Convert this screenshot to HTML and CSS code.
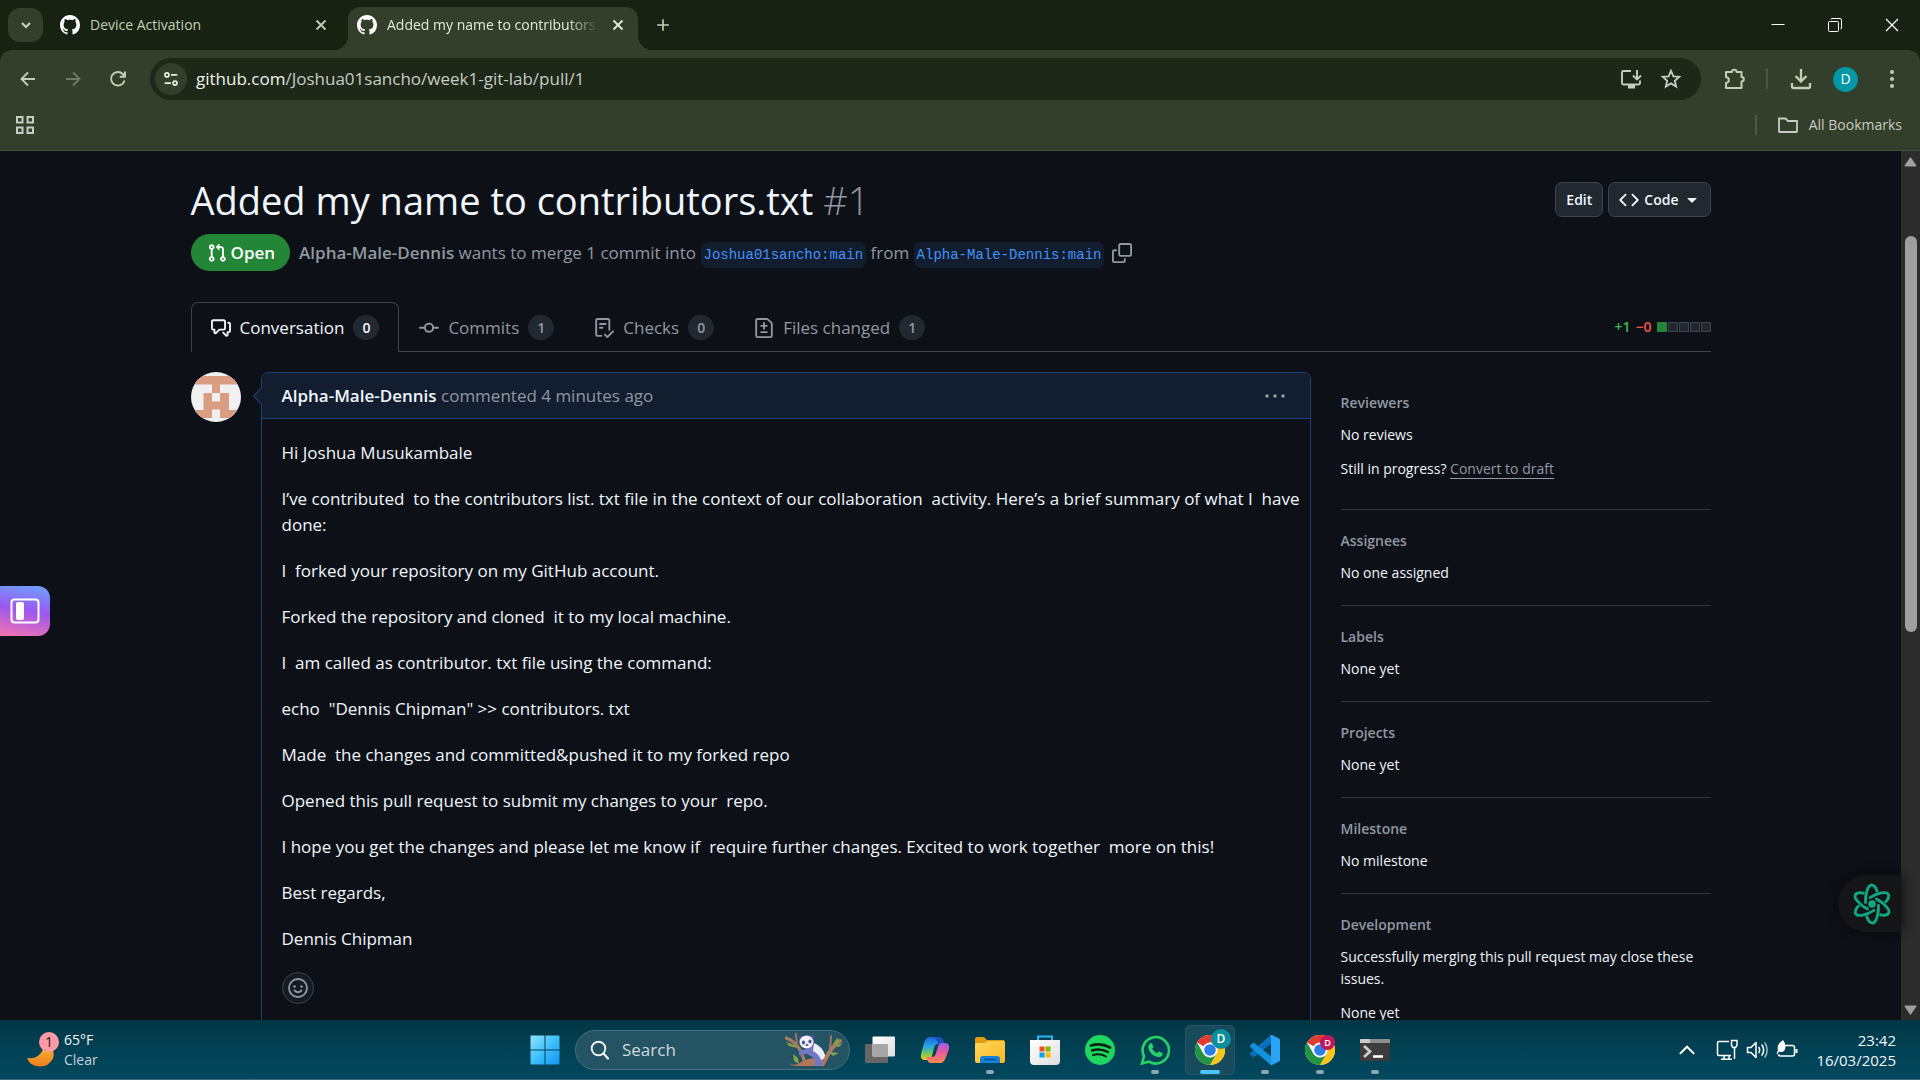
FILE: index.html
```html
<!DOCTYPE html>
<html lang="en">
<head>
<meta charset="utf-8">
<title>Added my name to contributors.txt by Alpha-Male-Dennis</title>
<link rel="stylesheet" href="styles.css">
</head>
<body>
<svg class="defs" aria-hidden="true">
  <defs>
    <symbol id="github" viewBox="0 0 16 16"><path d="M8 0c4.42 0 8 3.58 8 8a8.013 8.013 0 0 1-5.45 7.59c-.4.08-.55-.17-.55-.38 0-.27.01-1.13.01-2.2 0-.75-.25-1.23-.54-1.48 1.78-.2 3.65-.88 3.65-3.95 0-.88-.31-1.59-.82-2.15.08-.2.36-1.02-.08-2.12 0 0-.67-.22-2.2.82-.64-.18-1.32-.27-2-.27-.68 0-1.36.09-2 .27-1.53-1.03-2.2-.82-2.2-.82-.44 1.1-.16 1.92-.08 2.12-.51.56-.82 1.28-.82 2.15 0 3.06 1.86 3.75 3.64 3.95-.23.2-.44.55-.51 1.07-.46.21-1.61.55-2.33-.66-.15-.24-.6-.83-1.23-.82-.67.01-.27.38.01.53.34.19.73.9.82 1.13.16.45.68 1.31 2.69.94 0 .67.01 1.3.01 1.49 0 .21-.15.45-.55.38A7.995 7.995 0 0 1 0 8c0-4.42 3.58-8 8-8Z"/></symbol>
    <symbol id="cross" viewBox="0 0 20 20"><path d="M5.500 5.500l9 9M14.500 5.500l-9 9" fill="none" stroke="currentColor" stroke-width="1.800"/></symbol>
    <symbol id="chrome" viewBox="0 0 30 30">
      <circle cx="15" cy="15" r="15" fill="#fff"/>
      <path d="M15 15 2 7.5A15 15 0 0 1 28 7.5H15Z" fill="#e33b2e"/>
      <path d="M28 7.5A15 15 0 0 1 15 30L21.500 18.750 15 7.500Z" fill="#fcc419"/>
      <path d="M2 7.500A15 15 0 0 0 15 30L21.500 18.750 8.500 18.750Z" fill="#229342"/>
      <circle cx="15" cy="15" r="7.500" fill="#fff"/>
      <circle cx="15" cy="15" r="5.800" fill="#2b7de9"/>
    </symbol>
    <linearGradient id="win" x1="0" y1="0" x2="1" y2="1"><stop offset="0" stop-color="#8fe2ff"/><stop offset=".5" stop-color="#3fc0fb"/><stop offset="1" stop-color="#0f93f5"/></linearGradient>
    <linearGradient id="moon" x1="0" y1="0" x2="0" y2="1"><stop offset="0" stop-color="#f3c03a"/><stop offset="1" stop-color="#ee7d1c"/></linearGradient>
    <linearGradient id="folder" x1="0" y1="0" x2="1" y2="1"><stop offset="0" stop-color="#ffd75e"/><stop offset="1" stop-color="#fbb722"/></linearGradient>
    <linearGradient id="copA" x1="0" y1="0" x2="0" y2="1"><stop offset="0" stop-color="#1a64d8"/><stop offset=".4" stop-color="#25a6e8"/><stop offset=".7" stop-color="#6cc85a"/><stop offset="1" stop-color="#f4c81e"/></linearGradient>
    <linearGradient id="copB" x1="0" y1="0" x2="0" y2="1"><stop offset="0" stop-color="#9a5cf0"/><stop offset=".5" stop-color="#ee5a9a"/><stop offset="1" stop-color="#fb8c4a"/></linearGradient>
    <linearGradient id="shade" x1="0" y1="0" x2="1" y2="1"><stop offset="0" stop-color="#fff"/><stop offset="1" stop-color="#ddd"/></linearGradient>
  </defs>
</svg>

<header class="browser">
  <div class="tabstrip">
    <button class="tab-search" aria-label="Search tabs"><svg viewBox="0 0 20 20"><path d="M6 8l4 4 4-4" fill="none" stroke="currentColor" stroke-width="2.200"/></svg></button>
    <div class="tab">
      <svg class="favicon"><use href="#github"/></svg>
      <span class="tab-title">Device Activation</span>
      <button class="tab-close" aria-label="Close tab"><svg><use href="#cross"/></svg></button>
    </div>
    <div class="tab tab-active">
      <svg class="favicon"><use href="#github"/></svg>
      <span class="tab-title">Added my name to contributors.txt</span>
      <button class="tab-close" aria-label="Close tab"><svg><use href="#cross"/></svg></button>
    </div>
    <button class="new-tab" aria-label="New tab"><svg viewBox="0 0 20 20"><path d="M10 3.500v13M3.500 10h13" fill="none" stroke="currentColor" stroke-width="1.800"/></svg></button>
    <div class="window-controls">
      <button aria-label="Minimize"><svg viewBox="0 0 20 20"><path d="M3.500 9.500h13" stroke="currentColor"/></svg></button>
      <button aria-label="Restore"><svg viewBox="0 0 20 20" fill="none" stroke="currentColor"><rect x="3.500" y="6.500" width="10" height="10" rx="1"/><path d="M6 4.500q0-1 1-1h8q1.500 0 1.500 1.500v8q0 1-1 1"/></svg></button>
      <button aria-label="Close window"><svg viewBox="0 0 20 20"><path d="M4 4l12 12M16 4 4 16" stroke="currentColor" stroke-width="1.200"/></svg></button>
    </div>
  </div>
  <div class="toolbar">
    <div class="nav-buttons">
      <button aria-label="Back"><svg viewBox="0 0 20 20"><path d="M17 10H4M10 3.500 3.500 10l6.500 6.500" fill="none" stroke="currentColor" stroke-width="1.900"/></svg></button>
      <button class="dim" aria-label="Forward"><svg viewBox="0 0 20 20"><path d="M3 10h13M10 3.500l6.500 6.500-6.500 6.500" fill="none" stroke="currentColor" stroke-width="1.900"/></svg></button>
      <button aria-label="Reload"><svg viewBox="0 0 20 20"><path d="M16.500 11.500A6.800 6.800 0 1 1 14.800 5L17 7.500M17 2.500v5.300h-5.300" fill="none" stroke="currentColor" stroke-width="1.900"/></svg></button>
    </div>
    <div class="omnibox">
      <button class="site-info" aria-label="Site information"><svg viewBox="0 0 20 20"><g fill="none" stroke="currentColor" stroke-width="1.900"><circle cx="5.500" cy="5.500" r="2.200"/><path d="M10 5.500h7M3 14.500h7"/><circle cx="14.500" cy="14.500" r="2.200"/></g></svg></button>
      <span class="url"><b>github.com</b>/Joshua01sancho/week1-git-lab/pull/1</span>
      <button class="omni-button" aria-label="Install app"><svg viewBox="0 0 22 22"><g fill="none" stroke="currentColor" stroke-width="1.900"><path d="M11 3H3.500Q2 3 2 4.500V15q0 1.500 1.500 1.500h15q1.500 0 1.500-1.500v-2.500M17 2v9M13 7.500l4 4 4-4"/></g><path d="M8 17h7v3.500H8z" fill="currentColor"/></svg></button>
      <button class="omni-button" aria-label="Bookmark this tab"><svg viewBox="0 0 22 22"><path d="M11 2.800l2.400 5.500 5.900.5-4.500 3.900 1.400 5.900-5.200-3.200-5.200 3.200 1.400-5.900L2.700 8.800l5.900-.5z" fill="none" stroke="currentColor" stroke-width="1.800"/></svg></button>
    </div>
    <div class="toolbar-actions">
      <button aria-label="Extensions"><svg viewBox="0 0 22 22"><path d="M2 4h6a2.300 2.300 0 0 1 4.600 0H17.500V9a2.300 2.300 0 0 1 0 4.600V20H2V15c3.800-.5 3.800-5.500 0-6z" fill="none" stroke="currentColor" stroke-width="2" stroke-linejoin="round"/></svg></button>
      <span class="divider"></span>
      <button aria-label="Downloads"><svg viewBox="0 0 22 22"><path d="M11 1v12M5.500 8l5.500 5.500L16.500 8M2 15v3.500q0 1.500 1.500 1.500h15q1.500 0 1.500-1.500V15" fill="none" stroke="currentColor" stroke-width="2.300"/></svg></button>
      <button class="profile" aria-label="Profile">D</button>
      <button class="menu" aria-label="Menu"><svg viewBox="0 0 22 22" fill="currentColor"><circle cx="11" cy="4" r="2"/><circle cx="11" cy="11" r="2"/><circle cx="11" cy="18" r="2"/></svg></button>
    </div>
  </div>
  <div class="bookmarks">
    <button class="apps" aria-label="Apps"><svg viewBox="0 0 20 20"><g fill="none" stroke="currentColor" stroke-width="2"><path d="M2 2h5.500v5.500H2zM12.500 2H18v5.500h-5.500zM2 12.500h5.500V18H2zM12.500 12.500H18V18h-5.500z"/></g></svg></button>
    <span class="divider"></span>
    <button class="all-bookmarks"><svg viewBox="0 0 22 22"><path d="M2 17.500v-13h6.500L11 7h9v10.500q0 .5-.500.500h-17q-.500 0-.500-.500z" fill="none" stroke="currentColor" stroke-width="1.800"/></svg>All Bookmarks</button>
  </div>
</header>

<div class="viewport">
  <main class="page">
    <div class="container">
      <div class="title-row">
        <h1>Added my name to contributors.txt <span class="number">#1</span></h1>
        <div class="title-actions">
          <button class="btn">Edit</button>
          <button class="btn"><svg class="icon" viewBox="0 0 16 16"><path d="m11.280 3.220 4.250 4.250a.75.75 0 0 1 0 1.060l-4.250 4.250a.749.749 0 0 1-1.275-.326.749.749 0 0 1 .215-.734L13.940 8l-3.720-3.720a.749.749 0 0 1 .326-1.275.749.749 0 0 1 .734.215Zm-6.560 0a.751.751 0 0 1 1.042.018.751.751 0 0 1 .018 1.042L2.060 8l3.720 3.720a.749.749 0 0 1-.326 1.275.749.749 0 0 1-.734-.215L.470 8.530a.75.75 0 0 1 0-1.060Z"/></svg>Code<svg class="icon caret" viewBox="0 0 16 16"><path d="m3.427 6.427 4.396 4.396a.25.25 0 0 0 .354 0l4.396-4.396A.25.25 0 0 0 12.396 6H3.604a.25.25 0 0 0-.177.427Z"/></svg></button>
        </div>
      </div>
      <div class="meta">
        <span class="state"><svg class="icon" viewBox="0 0 16 16"><path d="M1.500 3.250a2.250 2.250 0 1 1 3 2.122v5.256a2.251 2.251 0 1 1-1.500 0V5.372A2.250 2.250 0 0 1 1.500 3.250Zm5.677-.177L9.573.677A.25.25 0 0 1 10 .854V2.500h1A2.500 2.500 0 0 1 13.500 5v5.628a2.251 2.251 0 1 1-1.500 0V5a1 1 0 0 0-1-1h-1v1.646a.25.25 0 0 1-.427.177L7.177 3.427a.25.25 0 0 1 0-.354ZM3.750 2.500a.75.75 0 1 0 0 1.500.75.75 0 0 0 0-1.500Zm0 9.500a.75.75 0 1 0 0 1.500.75.75 0 0 0 0-1.500Zm8.250.75a.75.75 0 1 0 1.500 0 .75.75 0 0 0-1.500 0Z"/></svg>Open</span>
        <span class="merge-text"><a class="author" href="#">Alpha-Male-Dennis</a> wants to merge 1 commit into <a class="ref" href="#">Joshua01sancho:main</a> from <a class="ref" href="#">Alpha-Male-Dennis:main</a></span>
        <button class="copy" aria-label="Copy branch name"><svg class="icon" viewBox="0 0 16 16"><path d="M0 6.750C0 5.784.784 5 1.750 5h1.500a.75.75 0 0 1 0 1.500h-1.500a.25.25 0 0 0-.250.250v7.500c0 .138.112.250.250.250h7.500a.25.25 0 0 0 .250-.250v-1.500a.75.75 0 0 1 1.500 0v1.500A1.750 1.750 0 0 1 9.250 16h-7.500A1.750 1.750 0 0 1 0 14.250Z"/><path d="M5 1.750C5 .784 5.784 0 6.750 0h7.500C15.216 0 16 .784 16 1.750v7.500A1.750 1.750 0 0 1 14.250 11h-7.500A1.750 1.750 0 0 1 5 9.250Zm1.750-.250a.25.25 0 0 0-.250.250v7.500c0 .138.112.250.250.250h7.500a.25.25 0 0 0 .250-.250v-7.500a.25.25 0 0 0-.250-.250Z"/></svg></button>
      </div>

      <nav class="pr-tabs">
        <a class="pr-tab selected" href="#"><svg class="icon" viewBox="0 0 16 16"><path d="M1.750 1h8.500c.966 0 1.750.784 1.750 1.750v5.500A1.750 1.750 0 0 1 10.250 10H7.061l-2.574 2.573A1.458 1.458 0 0 1 2 11.543V10h-.250A1.750 1.750 0 0 1 0 8.250v-5.500C0 1.784.784 1 1.750 1ZM1.500 2.750v5.500c0 .138.112.250.250.250h1a.75.75 0 0 1 .750.750v2.190l2.720-2.720a.749.749 0 0 1 .530-.220h3.500a.25.25 0 0 0 .250-.250v-5.500a.25.25 0 0 0-.250-.250h-8.500a.25.25 0 0 0-.250.250Zm13 2a.25.25 0 0 0-.250-.250h-.500a.75.75 0 0 1 0-1.500h.500c.966 0 1.750.784 1.750 1.750v5.500A1.750 1.750 0 0 1 14.250 12H14v1.543a1.458 1.458 0 0 1-2.487 1.030L9.220 12.280a.749.749 0 0 1 .326-1.275.749.749 0 0 1 .734.215l2.220 2.220v-2.190a.75.75 0 0 1 .750-.750h1a.25.25 0 0 0 .250-.250Z"/></svg>Conversation<span class="counter">0</span></a>
        <a class="pr-tab" href="#"><svg class="icon" viewBox="0 0 16 16"><path d="M11.930 8.500a4.002 4.002 0 0 1-7.860 0H.750a.75.75 0 0 1 0-1.500h3.320a4.002 4.002 0 0 1 7.860 0h3.320a.75.75 0 0 1 0 1.500Zm-1.430-.750a2.500 2.500 0 1 0-5 0 2.500 2.500 0 0 0 5 0Z"/></svg>Commits<span class="counter">1</span></a>
        <a class="pr-tab" href="#"><svg class="icon" viewBox="0 0 16 16"><path d="M2.500 1.750v11.500c0 .138.112.250.250.250h3.170a.75.75 0 0 1 0 1.500H2.750A1.750 1.750 0 0 1 1 13.250V1.750C1 .784 1.784 0 2.750 0h8.500C12.216 0 13 .784 13 1.750v7.736a.75.75 0 0 1-1.500 0V1.750a.25.25 0 0 0-.250-.250h-8.500a.25.25 0 0 0-.250.250Zm13.274 9.537v-.001l-4.557 4.450a.75.75 0 0 1-1.055-.008l-1.943-1.950a.75.75 0 0 1 1.062-1.058l1.419 1.425 4.026-3.932a.75.75 0 1 1 1.048 1.074ZM4.750 4h4.500a.75.75 0 0 1 0 1.500h-4.500a.75.75 0 0 1 0-1.500ZM4 7.750A.75.75 0 0 1 4.750 7h2a.75.75 0 0 1 0 1.500h-2A.75.75 0 0 1 4 7.750Z"/></svg>Checks<span class="counter">0</span></a>
        <a class="pr-tab" href="#"><svg class="icon" viewBox="0 0 16 16"><path d="M1 1.750C1 .784 1.784 0 2.750 0h7.586c.464 0 .909.184 1.237.513l2.914 2.914c.329.328.513.773.513 1.237v9.586A1.750 1.750 0 0 1 13.250 16H2.750A1.750 1.750 0 0 1 1 14.250Zm1.750-.250a.25.25 0 0 0-.250.250v12.500c0 .138.112.250.250.250h10.500a.25.25 0 0 0 .250-.250V4.664a.25.25 0 0 0-.073-.177l-2.914-2.914a.25.25 0 0 0-.177-.073ZM8 3.250a.75.75 0 0 1 .750.750v1.500h1.500a.75.75 0 0 1 0 1.500h-1.500v1.500a.75.75 0 0 1-1.500 0V7h-1.500a.75.75 0 0 1 0-1.500h1.500V4A.75.75 0 0 1 8 3.250Zm-3 8a.75.75 0 0 1 .750-.750h4.500a.75.75 0 0 1 0 1.500h-4.500a.75.75 0 0 1-.750-.750Z"/></svg>Files changed<span class="counter">1</span></a>
        <span class="diffstat"><span class="added">+1</span><span class="removed">−0</span><span class="blocks"><i class="on"></i><i></i><i></i><i></i><i></i></span></span>
      </nav>

      <div class="columns">
        <svg class="avatar" viewBox="0 0 50 50"><clipPath id="round"><circle cx="25" cy="25" r="25"/></clipPath><g clip-path="url(#round)"><path fill="#f0f0f0" d="M0 0h50v50H0z"/><path fill="#d99d82" d="M4 4h42v8.500H29v8.500h9v17h8v8H29v-8.500h-8V46H4v-8h8.500V21H21v-8.500H4zM21 21v8.500h8V21z"/></g></svg>
        <article class="comment">
          <svg class="pointer" viewBox="0 0 10 20"><path d="M10 0 0 10l10 10z" fill="#121d2f"/><path d="M10 .500.700 10l9.300 9.500" fill="none" stroke="#1d4277" stroke-width="1.200"/></svg>
          <header class="comment-head">
            <span><a class="who" href="#">Alpha-Male-Dennis</a> commented 4 minutes ago</span>
            <button class="kebab" aria-label="Show options"><svg class="icon" viewBox="0 0 20 20"><circle cx="2" cy="10" r="1.800"/><circle cx="10" cy="10" r="1.800"/><circle cx="18" cy="10" r="1.800"/></svg></button>
          </header>
          <div class="comment-body">
            <p>Hi Joshua Musukambale</p>
            <p>I’ve contributed&nbsp; to the contributors list. txt file in the context of our collaboration&nbsp; activity. Here’s a brief summary of what I&nbsp; have done:</p>
            <p>I&nbsp; forked your repository on my GitHub account.</p>
            <p>Forked the repository and cloned&nbsp; it to my local machine.</p>
            <p>I&nbsp; am called as contributor. txt file using the command:</p>
            <p>echo&nbsp; "Dennis Chipman" &gt;&gt; contributors. txt</p>
            <p>Made&nbsp; the changes and committed&amp;pushed it to my forked repo</p>
            <p>Opened this pull request to submit my changes to your&nbsp; repo.</p>
            <p>I hope you get the changes and please let me know if&nbsp; require further changes. Excited to work together&nbsp; more on this!</p>
            <p>Best regards,</p>
            <p>Dennis Chipman</p>
            <button class="react" aria-label="Add reaction"><svg viewBox="0 0 20 20"><g fill="none" stroke="currentColor" stroke-width="1.800"><circle cx="10" cy="10" r="9"/><path d="M6.500 12.500q3.500 3.500 7 0" stroke-linecap="round"/></g><circle cx="6.500" cy="8.500" r="1.300" fill="currentColor"/><circle cx="13.500" cy="8.500" r="1.300" fill="currentColor"/></svg></button>
          </div>
        </article>
        <aside class="sidebar">
          <section><h2>Reviewers</h2><p>No reviews</p><p class="draft">Still in progress? <a href="#">Convert to draft</a></p></section>
          <section><h2>Assignees</h2><p>No one assigned</p></section>
          <section><h2>Labels</h2><p>None yet</p></section>
          <section><h2>Projects</h2><p>None yet</p></section>
          <section><h2>Milestone</h2><p>No milestone</p></section>
          <section><h2>Development</h2><p>Successfully merging this pull request may close these issues.</p><p>None yet</p></section>
        </aside>
      </div>
    </div>
  </main>
  <button class="side-panel" aria-label="Open side panel"><svg viewBox="0 0 30 26"><rect x="1.500" y="1.500" width="27" height="23" rx="3" fill="none" stroke="#fff" stroke-width="2"/><rect x="6" y="4" width="8" height="18" rx="2" fill="#fff"/></svg></button>
  <button class="assistant" aria-label="Open assistant"><svg viewBox="-21 -21 42 42"><g fill="none" stroke="#10a882" stroke-width="2.900" stroke-linecap="round"><g id="petal"><path d="M-6.500-1.500C-7-10-4-19-.500-19c2.500 0 4.500 3 5.500 6"/></g><use href="#petal" transform="rotate(60)"/><use href="#petal" transform="rotate(120)"/><use href="#petal" transform="rotate(180)"/><use href="#petal" transform="rotate(240)"/><use href="#petal" transform="rotate(300)"/></g><circle r="3.800" fill="#10a882"/></svg></button>
  <div class="scrollbar" aria-hidden="true">
    <svg viewBox="0 0 19 22"><path d="M9.500 6 15.500 14.500q0 1-1 1h-10q-1 0-1-1z" fill="#9f9f9f"/></svg>
    <div class="track"><div class="thumb"></div></div>
    <svg viewBox="0 0 19 22"><path d="M9.500 17 15.500 8.500q0-1-1-1h-10q-1 0-1 1z" fill="#9f9f9f"/></svg>
  </div>
</div>

<footer class="taskbar">
  <button class="weather">
    <svg viewBox="0 0 34 38"><path d="M1 27q15 2 18-16 11 6 8 16.500-5 9-14 8Q4 35 1 27z" fill="url(#moon)"/><circle cx="23" cy="11" r="10" fill="#ff99a4"/><text x="23" y="16" text-anchor="middle" class="badge-one">1</text></svg>
    <span class="weather-text"><span>65°F</span><span class="soft">Clear</span></span>
  </button>
  <div class="apps-row">
    <button class="app" aria-label="Start"><svg viewBox="0 0 30 30" fill="url(#win)"><path d="M1.500.500H14.500V14.500H.500V1.500q0-1 1-1zM15.500.500H28.500q1 0 1 1V14.500H15.500zM.500 15.500H14.500V29.500H1.500q-1 0-1-1zM15.500 15.500H29.500V28.500q0 1-1 1H15.500z"/></svg></button>
    <label class="search">
      <svg viewBox="0 0 20 20"><circle cx="8.500" cy="8.500" r="6.800" fill="none" stroke="#f2f5f6" stroke-width="1.900"/><path d="M13.500 13.500 18 18.500" stroke="#f2f5f6" stroke-width="2.200" stroke-linecap="round"/></svg>
      <input type="text" placeholder="Search" aria-label="Search">
      <svg class="panda" viewBox="0 0 58 34">
        <g fill="none" stroke="#a97b62" stroke-linecap="round"><path d="M1 5q9 3 14 12l5 12" stroke-width="3.200"/><path d="M11 1l1 11M46 3l-1 15" stroke-width="1.800"/><path d="M55 8Q46 14 40 27" stroke-width="4"/></g>
        <path d="M1 9l9 3 2 3-8-2zM8 21l5 4 1 6-5-3zM48 11l4-6 2 2-3 5zM44 19l10 1-6 3zM50 13l8-3-4 4z" fill="#86a24a"/>
        <path d="M4 30q4 3 9 1 11-8 22-5l9-3-5 10H12q-6 0-8-3z" fill="#b4765a"/>
        <path d="M14 17q10 0 15-6 8 8 9 15l-1 7h-7l-1-8-7-4-8 1z" fill="#7377c4"/>
        <path d="M29 10q9 4 11 12 0 4-4 5-2-6-8-9z" fill="#eeecf6"/>
        <circle cx="16.500" cy="5" r="2.600" fill="#4a50a0"/><circle cx="27" cy="4" r="2.600" fill="#4a50a0"/>
        <ellipse cx="21.500" cy="9" rx="7" ry="6.500" fill="#f3f1f8"/>
        <ellipse cx="18.500" cy="9.500" rx="1.600" ry="2" fill="#4a50a0"/><ellipse cx="25" cy="8.500" rx="1.600" ry="2" fill="#4a50a0"/><ellipse cx="22" cy="12" rx="1.500" ry="1" fill="#4a50a0"/>
      </svg>
    </label>
    <button class="app" aria-label="Task view"><svg viewBox="0 0 30 30"><rect y="9" width="23" height="19" rx="1" fill="#666"/><rect x="7.500" y="1.500" width="22.500" height="20" rx="1" fill="url(#shade)"/><path d="M7.500 9H23v12.500H7.500z" fill="#a6a6a6"/></svg></button>
    <button class="app" aria-label="Copilot"><svg viewBox="0 0 30 30"><path d="M10 2h9q3 0 4 4l1 3h-6q-3 0-4 4l-2 8q-1 4-4 4H5q-5 0-4-6L4 8q2-6 6-6z" fill="url(#copA)"/><path d="M19 2q3 0 4 4l1 3h-6l-1-3q-1-3-4-4z" fill="#1d4fc0"/><path d="M20 28h-9q-3 0-4-4l-1-2h6q3 0 4-4l2-7q1-3 4-3h3q5 0 4 6l-3 8q-2 6-6 6z" fill="url(#copB)"/></svg></button>
    <button class="app running" aria-label="File Explorer"><svg viewBox="0 0 30 30"><path d="M0 4q0-2 2-2h7l3 3h16q2 0 2 2v4H0z" fill="#e29b10"/><path d="M0 9q0-1 1-1h9l3-2h15q2 0 2 2v18q0 2-2 2H2q-2 0-2-2z" fill="url(#folder)"/><path d="M5 28v-4q0-3 3-3h14q3 0 3 3v4z" fill="#1482d8"/><path d="M9 24.500h12" stroke="#0a4f93" stroke-width="1.500"/></svg></button>
    <button class="app" aria-label="Microsoft Store"><svg viewBox="0 0 30 30"><path d="M8 6V1.500h14V6" fill="none" stroke="#2cb5ee" stroke-width="2"/><path d="M0 5h30v21q0 4-4 4H4q-4 0-4-4z" fill="url(#shade)"/><path d="M9.500 11.500h5v5h-5z" fill="#f25022"/><path d="M15.500 11.500h5v5h-5z" fill="#7fba00"/><path d="M9.500 17.500h5v5h-5z" fill="#00a4ef"/><path d="M15.500 17.500h5v5h-5z" fill="#ffb900"/></svg></button>
    <button class="app" aria-label="Spotify"><svg viewBox="0 0 30 30"><circle cx="15" cy="15" r="15" fill="#1ed760"/><g fill="none" stroke="#0c1f14" stroke-linecap="round"><path d="M6 10.500q10-3 19 2" stroke-width="2.800"/><path d="M7 15.500q8-2.500 16 1.500" stroke-width="2.400"/><path d="M8 20q7-2 13 1.500" stroke-width="2"/></g></svg></button>
    <button class="app running" aria-label="WhatsApp"><svg viewBox="0 0 30 30"><path d="M2 28.500l2-7.300A13.200 13.200 0 1 1 9 26.600z" fill="none" stroke="#25d366" stroke-width="2.600"/><path d="M10 8.500q1.500-1 2.300.500l1 2.500q.300.800-1.100 2.200 1.500 3 4.800 4.500 1.500-2 2.200-1.700l3 1.500q1 .500 0 2.500-1.500 2-4.500 1.500-8-2-9.500-9.500 0-2.500 1.800-4z" fill="#25d366"/></svg></button>
    <button class="app current" aria-label="Chrome"><svg viewBox="0 0 30 30"><use href="#chrome"/></svg><span class="badge teal">D</span></button>
    <button class="app running" aria-label="Visual Studio Code"><svg viewBox="0 0 30 30"><path d="M22 0v8L3.500 22.500 0 19.500q-.500-1 .5-1.800L20 .500z" fill="#0b6fc0"/><path d="M22 30v-8L3.500 7.500 0 10.500q-.500 1 .5 1.800L20 29.500z" fill="#1590dc"/><path d="M22 0l7 3.500q1 .500 1 1.500v20q0 1-1 1.500L22 30q-1.500 0-2-1l1-1V2l-1-1q.500-1 2-1z" fill="#2aa5f5"/></svg></button>
    <button class="app running" aria-label="Chrome, second profile"><svg viewBox="0 0 30 30"><use href="#chrome"/></svg><span class="badge pink">D</span></button>
    <button class="app running" aria-label="Terminal"><svg viewBox="0 0 30 30"><rect y="4" width="30" height="22" rx="1.500" fill="#3c3c3c"/><path d="M0 8V5q0-1 1-1h28q1 0 1 1v3z" fill="#8d8d8d"/><path d="M0 8V5q0-1 1-1h9v4z" fill="#c9c9c9"/><path d="M4 11l6 5.500L4 22" fill="none" stroke="#ccc" stroke-width="2.800"/><path d="M13 21.500h10" stroke="#fff" stroke-width="2.600"/></svg></button>
  </div>
  <div class="tray">
    <button aria-label="Show hidden icons"><svg viewBox="0 0 20 20"><path d="M3.500 13.500 10 7l6.500 6.500" fill="none" stroke="#fff" stroke-width="1.800"/></svg></button>
    <button class="status" aria-label="Network, volume and battery">
      <svg viewBox="0 0 22 22"><g fill="none" stroke="#fff" stroke-width="1.500"><path d="M13 2.500H3q-1.500 0-1.500 1.500v11q0 1.500 1.500 1.500h12M8 17v3M13 17v3M5 20.200h11M18.500 8.500V20"/><path d="M15.500 1.500h5.500v5l-1.500 2h-2.500l-1.500-2z"/></g></svg>
      <svg viewBox="0 0 22 22"><g fill="none" stroke="#fff" stroke-width="1.500" stroke-linecap="round"><path d="M1.500 8.500v5h3.500l5 5V3.500l-5 5z" stroke-linejoin="round"/><path d="M13 8.500q1.500 2.500 0 5"/><path d="M16 6q3.300 5 0 10"/><path d="M19 4q4.300 7 0 14" stroke="#9fbcc4"/></g></svg>
      <svg viewBox="0 0 22 22"><path d="M9 6.500h7.500q2 0 2 2v6.500q0 2-2 2H4.500q-2 0-2-2" fill="none" stroke="#fff" stroke-width="1.500"/><path d="M19.500 10h2v4h-2z" fill="#fff"/><path d="M7 1q4 5 1.500 10.500Q6 14 3 12.500L1.500 15l-1-.500 1.500-3.500Q0 6 7 1z" fill="#fff"/></svg>
    </button>
    <button class="clock"><span>23:42</span><span>16/03/2025</span></button>
  </div>
</footer>
</body>
</html>
```
FILE: styles.css
```css
* {
  box-sizing: border-box;
}

body {
  margin: 0;
  height: 100vh;
  display: flex;
  flex-direction: column;
  overflow: hidden;
  background: #0d1117;
  color: #f0f6fc;
  font: 17px/26px "Open Sans", "Noto Sans", sans-serif;
}

button {
  display: flex;
  align-items: center;
  justify-content: center;
  padding: 0;
  border: 0;
  background: none;
  color: inherit;
  font: inherit;
}

a {
  color: inherit;
  text-decoration: none;
}

h1,
h2,
p {
  margin: 0;
}

svg {
  display: block;
  flex: none;
}

.defs {
  position: absolute;
  width: 0;
  height: 0;
}

.icon {
  width: 20px;
  height: 20px;
  fill: currentColor;
}

/* Browser frame */

.browser {
  flex: none;
  background: #182212;
  color: #c3cfb5;
}

.tabstrip {
  display: flex;
  align-items: flex-end;
  height: 50px;
  padding-left: 8px;
}

.tab-search {
  align-self: center;
  width: 35px;
  height: 34px;
  border-radius: 12px;
  background: #333e2b;
}

.tab-search svg {
  width: 20px;
  height: 20px;
}

.tab {
  display: flex;
  align-items: center;
  width: 290px;
  height: 43px;
  padding: 0 10px 7px 9px;
  margin-left: 8px;
  font-size: 14px;
}

.tab .tab-title {
  flex: 1;
  margin-left: 10px;
  overflow: hidden;
  white-space: nowrap;
}

.tab-active {
  position: relative;
  margin-left: 7px;
  border-radius: 12px 12px 0 0;
  background: #333e2b;
  color: #e2ead9;
}

.tab-active::before,
.tab-active::after {
  content: "";
  position: absolute;
  bottom: 0;
  width: 14px;
  height: 14px;
}

.tab-active::before {
  right: 100%;
  background: radial-gradient(circle at 0 0, transparent 14px, #333e2b 14px);
}

.tab-active::after {
  left: 100%;
  background: radial-gradient(circle at 100% 0, transparent 14px, #333e2b 14px);
}

.tab-active .tab-title {
  -webkit-mask-image: linear-gradient(90deg, #000 85%, transparent);
  mask-image: linear-gradient(90deg, #000 85%, transparent);
}

.favicon {
  width: 20px;
  height: 20px;
  fill: #fff;
}

.tab-close,
.tab-close svg {
  width: 20px;
  height: 20px;
}

.tab-close {
  margin-left: 9px;
}

.new-tab {
  align-self: center;
  width: 20px;
  height: 20px;
  margin-left: 15px;
}

.new-tab svg {
  width: 18px;
}

.window-controls {
  display: flex;
  align-self: center;
  margin-left: auto;
  color: #fff;
}

.window-controls button {
  width: 57px;
  height: 50px;
}

.window-controls svg {
  width: 20px;
}

.toolbar {
  display: flex;
  align-items: center;
  height: 50px;
  padding: 8px 17px 0 18px;
  border-radius: 12px 12px 0 0;
  background: #333e2b;
}

.nav-buttons {
  display: flex;
  gap: 25px;
  margin-right: 22px;
}

.nav-buttons svg {
  width: 20px;
}

.dim {
  color: #6f7a66;
}

.omnibox {
  display: flex;
  flex: 1;
  align-items: center;
  height: 42px;
  padding: 0 19px 0 5px;
  border-radius: 21px;
  background: #1e2819;
  color: #c8ccc4;
}

.site-info {
  width: 32px;
  height: 32px;
  border-radius: 16px;
  background: #333e2b;
  color: #e8ece4;
}

.site-info svg {
  width: 18px;
}

.url {
  flex: 1;
  margin-left: 9px;
}

.url b {
  color: #eef1ea;
  font-weight: 400;
}

.omni-button {
  margin-left: 18px;
}

.omni-button svg {
  width: 22px;
}

.toolbar-actions {
  display: flex;
  align-items: center;
  margin-left: 23px;
}

.toolbar-actions svg {
  width: 22px;
}

.divider {
  width: 2px;
  height: 20px;
  background: #4d5945;
}

.toolbar-actions .divider {
  margin: 0 22px 0 20px;
}

.profile {
  width: 25px;
  height: 25px;
  margin: 0 23px 0 21px;
  border-radius: 50%;
  background: #0197a7;
  color: #fff;
  font-size: 14px;
}

.bookmarks {
  display: flex;
  align-items: center;
  height: 51px;
  padding: 0 18px 0 15px;
  border-bottom: 1px solid #454f3e;
  background: #333e2b;
  color: #c8ccc4;
}

.apps {
  margin-right: auto;
}

.apps svg {
  width: 20px;
}

.all-bookmarks {
  gap: 10px;
  margin-left: 20px;
  font-size: 14px;
}

.all-bookmarks svg {
  width: 22px;
}

/* Page */

.viewport {
  position: relative;
  display: flex;
  flex: 1;
  min-height: 0;
  overflow: hidden;
}

.page {
  flex: 1;
  min-width: 0;
  overflow: hidden;
}

.container {
  max-width: 1600px;
  margin: 0 auto;
  padding: 25px 40px 0;
}

.title-row {
  display: flex;
  align-items: flex-start;
  justify-content: space-between;
}

h1 {
  font-size: 38px;
  font-weight: 400;
  line-height: 48px;
}

.number {
  color: #9198a1;
  font-weight: 300;
}

.title-actions {
  display: flex;
  gap: 5px;
  margin-top: 6px;
}

.btn {
  gap: 5px;
  height: 35px;
  padding: 0 10px;
  border: 1px solid #3d444d;
  border-radius: 7px;
  background: #212830;
  font-size: 14px;
  font-weight: 600;
}

.caret {
  width: 16px;
  height: 16px;
}

.meta {
  display: flex;
  align-items: center;
  margin-top: 10px;
  color: #9198a1;
}

.state {
  display: flex;
  align-items: center;
  gap: 4px;
  height: 37px;
  padding: 0 15px 0 16px;
  border-radius: 19px;
  background: #238636;
  color: #fff;
  font-weight: 600;
}

.merge-text {
  margin-left: 9px;
}

.author {
  font-weight: 600;
}

.ref {
  padding: 5px 3px;
  border-radius: 7px;
  background: #121d2f;
  color: #4493f8;
  font: 14px "Liberation Mono", monospace;
}

.copy {
  margin-left: 8px;
}

.pr-tabs {
  display: flex;
  height: 50px;
  margin: 31px 0 20px;
  box-shadow: inset 0 -1px #3d444d;
}

.pr-tab {
  display: flex;
  align-items: center;
  gap: 9px;
  padding: 0 19px;
  border: 1px solid transparent;
  border-bottom: 0;
  color: #9198a1;
}

.selected {
  border-color: #3d444d;
  border-radius: 7px 7px 0 0;
  background: #0d1117;
  color: #f0f6fc;
}

.counter {
  min-width: 26px;
  height: 25px;
  border-radius: 13px;
  background: #212830;
  font-size: 14px;
  font-weight: 600;
  line-height: 25px;
  text-align: center;
}

.diffstat {
  display: flex;
  align-items: center;
  gap: 5px;
  margin-left: auto;
  font-size: 14px;
  font-weight: 600;
}

.added {
  color: #3fb950;
}

.removed {
  color: #f85149;
}

.blocks {
  display: flex;
  gap: 1px;
}

.blocks i {
  width: 10px;
  height: 10px;
  border: 1px solid #3d444d;
  background: #212830;
}

.blocks .on {
  border-color: #238636;
  background: #238636;
}

.columns {
  display: grid;
  grid-template-columns: 50px minmax(0, 1fr) 370px;
  align-items: start;
}

.avatar {
  width: 50px;
  height: 50px;
}

.comment {
  position: relative;
  min-height: 720px;
  margin: 0 30px 0 20px;
  border: 1px solid #1d4277;
  border-radius: 7px;
}

.pointer {
  position: absolute;
  top: 14px;
  right: 100%;
  width: 9px;
}

.comment-head {
  display: flex;
  align-items: center;
  justify-content: space-between;
  height: 46px;
  padding: 0 25px 0 20px;
  border-bottom: 1px solid #1d4277;
  border-radius: 6px 6px 0 0;
  background: #121d2f;
  color: #9198a1;
}

.who {
  color: #f0f6fc;
  font-weight: 600;
}

.comment-body {
  padding: 21px 8px 21px 20px;
}

.comment-body p {
  margin-bottom: 20px;
}

.react {
  width: 32px;
  height: 32px;
  border: 1px solid #3d444d;
  border-radius: 50%;
  background: #151b23;
  color: #9198a1;
}

.react svg {
  width: 20px;
}

.sidebar {
  font-size: 14px;
  line-height: 22px;
}

.sidebar section {
  padding: 20px 0 21px;
}

.sidebar section + section {
  border-top: 1px solid #2f353d;
}

.sidebar h2 {
  margin-bottom: 10px;
  color: #9198a1;
  font-size: 14px;
  font-weight: 600;
  line-height: 22px;
}

.sidebar p + p {
  margin-top: 12px;
}

.sidebar .draft {
  margin-bottom: 8px;
}

.draft a {
  border-bottom: 1px solid #9198a1;
  color: #9198a1;
}

.side-panel {
  position: absolute;
  top: 435px;
  left: 0;
  width: 50px;
  height: 50px;
  border-radius: 0 12px 12px 0;
  background: linear-gradient(190deg, #6aa5ff, #9c56f0 48%, #f274b0);
}

.side-panel svg {
  width: 30px;
}

.assistant {
  position: absolute;
  top: 724px;
  right: 19px;
  width: 63px;
  height: 57px;
  padding-left: 5px;
  border-radius: 28px 0 0 28px;
  background: #131516;
  box-shadow: 0 0 12px #07090c;
}

.assistant svg {
  width: 42px;
}

.scrollbar {
  display: flex;
  flex: none;
  flex-direction: column;
  width: 19px;
  background: #2c2c2c;
}

.track {
  flex: 1;
  padding: 63px 3px 0 4px;
}

.thumb {
  height: 52%;
  border-radius: 6px;
  background: #9f9f9f;
}

/* Taskbar */

.taskbar {
  display: grid;
  flex: none;
  grid-template-columns: 1fr auto 1fr;
  align-items: center;
  height: 60px;
  border-bottom: 1px solid #3d6877;
  background: linear-gradient(#023645, #034256 55%, #02485e);
  font-size: 14px;
  line-height: 20px;
}

.weather {
  justify-self: start;
  gap: 4px;
  padding-left: 26px;
}

.weather svg {
  width: 34px;
}

.badge-one {
  fill: #1b1b1b;
  font-size: 14px;
}

.weather-text,
.clock {
  display: flex;
  flex-direction: column;
  text-align: left;
}

.soft {
  color: #c5d3d8;
}

.apps-row {
  display: flex;
  align-items: center;
  gap: 5px;
}

.app {
  position: relative;
  width: 50px;
  height: 50px;
  border-radius: 6px;
}

.app > svg {
  width: 30px;
}

.running::after,
.current::after {
  content: "";
  position: absolute;
  bottom: 1px;
  left: 50%;
  width: 8px;
  height: 4px;
  margin-left: -4px;
  border-radius: 2px;
  background: #8fa9b1;
}

.current {
  background: #174a5a;
  box-shadow: inset 0 0 0 1px #285564;
}

.current::after {
  width: 20px;
  margin-left: -10px;
  background: #4cc2ff;
}

.badge {
  position: absolute;
  border-radius: 50%;
  color: #fff;
  font-weight: 600;
  text-align: center;
}

.teal {
  top: 4px;
  right: 4px;
  width: 20px;
  height: 20px;
  background: #0b8f9f;
  font-size: 12px;
}

.pink {
  top: 10px;
  right: 10px;
  width: 15px;
  height: 15px;
  background: #c2185b;
  font-size: 9px;
  line-height: 15px;
}

.search {
  display: flex;
  align-items: center;
  width: 275px;
  height: 40px;
  padding: 0 6px 0 14px;
  border: 1px solid #456f7c;
  border-radius: 20px;
  background: #245363;
}

.search > svg {
  width: 20px;
}

.search input {
  flex: 1;
  min-width: 0;
  padding: 0 0 0 12px;
  border: 0;
  background: none;
  color: #fff;
  font: 17px "Open Sans", "Noto Sans", sans-serif;
}

.search input::placeholder {
  color: #cfdadd;
  opacity: 1;
}

.search .panda {
  width: 58px;
}

.tray {
  display: flex;
  align-items: center;
  justify-self: end;
  gap: 18px;
  padding-right: 24px;
}

.tray svg {
  width: 22px;
}

.status {
  gap: 8px;
}

.clock {
  align-items: flex-end;
  font-size: 15px;
}
```
